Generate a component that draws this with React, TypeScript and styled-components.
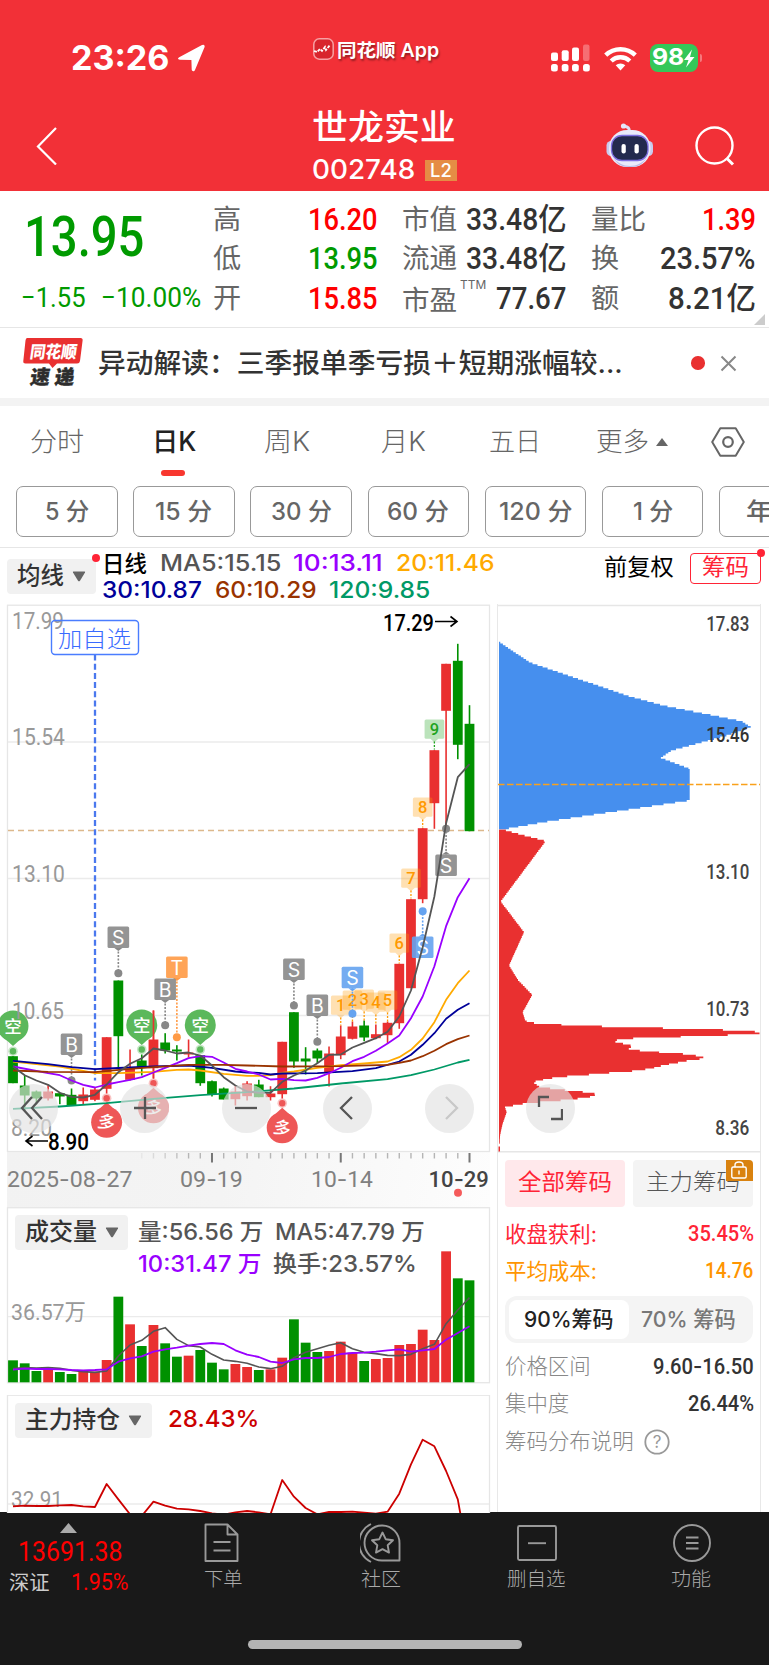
import React, { useLayoutEffect, useRef, useState } from 'react';
import styled, { createGlobalStyle } from 'styled-components';

const UI = `Inter, "Noto Sans CJK SC", sans-serif`;
const DIN = `Roboto, "Noto Sans CJK SC", sans-serif`;
const RED = '#e93030';
const GREEN = '#009100';

const GlobalStyle = createGlobalStyle`
  * { box-sizing: border-box; }
  body { margin: 0; background: #fff; overflow: hidden; font-family: ${UI}; }
  svg { display: block; flex: none; }
`;

/* ---------- text fitted to a fixed column width ---------- */
type TextProps = {
  children: string; w: number; size: number; color?: string; weight?: number;
  gap?: number; din?: boolean; drop?: number; shadow?: boolean;
};
const TextBox = styled.span<{ $w: number; $gap: number; $drop: number }>`
  display: block; flex: none; width: ${p => p.$w}px; margin-left: ${p => p.$gap}px;
  padding-top: ${p => p.$drop}px; white-space: nowrap; line-height: 1.2;
`;
const TextInk = styled.span<{ $size: number; $color: string; $weight: number; $din: boolean; $shadow: boolean }>`
  display: inline-block; vertical-align: top; transform-origin: 0 50%;
  font-family: ${p => (p.$din ? DIN : UI)};
  font-size: ${p => p.$size}px; font-weight: ${p => p.$weight}; color: ${p => p.$color};
  margin-left: ${p => -p.$size * 0.04}px;
  text-shadow: ${p => (p.$shadow ? '1px 2px 2px rgba(0,0,0,.4)' : 'none')};
`;
const Dash = styled.span`font-family: Inter, sans-serif;`;

function Text({ children, w, size, color = '#333', weight = 400, gap = 0, din = false, drop = 0, shadow = false }: TextProps) {
  const ref = useRef<HTMLSpanElement>(null);
  const [scale, setScale] = useState(1);
  useLayoutEffect(() => {
    if (ref.current) setScale((w + size * 0.08) / ref.current.offsetWidth);
  }, [w, size, children]);
  return (
    <TextBox $w={w} $gap={gap} $drop={drop}>
      <TextInk ref={ref} $size={size} $color={color} $weight={weight} $din={din} $shadow={shadow} style={{ transform: `scaleX(${scale})` }}>
        {din && children.includes('-')
          ? children.split(/(-)/).map((part, i) => (part === '-' ? <Dash key={i}>-</Dash> : part))
          : children}
      </TextInk>
    </TextBox>
  );
}

const Label = ({ x, y, w, size, fill = '#999', weight = 400, children, family = DIN }: {
  x: number; y: number; w: number; size: number; fill?: string; weight?: number; children: string; family?: string;
}) => (
  <text x={x - size * 0.04} y={y} fontFamily={family} fontSize={size} fontWeight={weight} fill={fill}
    textLength={w + size * 0.08} lengthAdjust="spacingAndGlyphs">
    {children.split(/(-)/).map((part, i) => (part === '-' ? <tspan key={i} fontFamily="Inter">-</tspan> : part))}
  </text>
);

/* ---------- header ---------- */
const Page = styled.main`width: 769px; height: 1665px; display: flex; flex-direction: column; overflow: hidden; background: #fff;`;
const Header = styled.header`background: #f23037; height: 191px; flex: none;`;
const StatusBar = styled.div`height: 101px; padding: 15px 0 0 72.700px; display: flex; align-items: center;`;
const Gap = styled.div<{ $w: number; $up?: number }>`margin-left: ${p => p.$w}px; margin-bottom: ${p => p.$up || 0}px; display: flex; align-items: center; flex: none;`;
const Battery = styled.div`
  width: 48px; height: 27.500px; border-radius: 8px; background: #34c759; display: flex; align-items: center; margin-left: 13px; padding-left: 3px;
`;
const BatteryNub = styled.div`width: 2.500px; height: 8px; margin-left: 2px; border-radius: 0 3px 3px 0; background: rgba(255,255,255,.35);`;
const TitleBar = styled.div`height: 90px; display: flex; align-items: center; padding-left: 36px;`;
const TitleBlock = styled.div`width: 150px; margin-left: 256px; align-self: flex-start; padding-top: 4px; flex: none;`;
const Line = styled.div<{ $h: number; $pad?: number }>`height: ${p => p.$h}px; display: flex; align-items: center; padding-left: ${p => p.$pad || 0}px;`;
const Level = styled.div`width: 32px; height: 21.500px; margin-left: 11px; background: #e58c45; display: flex; align-items: center; justify-content: center;`;

const Robot = () => (
  <svg width="49" height="46" viewBox="605 124 49 46">
    <path d="M629 133c1-4-1-5-5-6" stroke="#dfe0f6" strokeWidth="3" fill="none" strokeLinecap="round" />
    <circle cx="623.5" cy="127" r="2.6" fill="#e6e6fa" />
    <rect x="606.5" y="142" width="9" height="15" rx="4.5" fill="#c9cbee" />
    <rect x="644" y="142" width="9" height="15" rx="4.5" fill="#c9cbee" />
    <rect x="609" y="131" width="41.500" height="37" rx="18" fill="#e9eafa" />
    <path d="M613 158c8 12 26 12 34 0-4 7-8 10-17 10s-13-3-17-10z" fill="#b9bce6" />
    <rect x="611.500" y="136.500" width="36.500" height="25" rx="10.500" fill="#232a4d" stroke="#7d6fe0" strokeWidth="1.300" />
    <rect x="621.500" y="145" width="4.300" height="9.500" rx="2.100" fill="#fff" />
    <rect x="634.500" y="145" width="4.300" height="9.500" rx="2.100" fill="#fff" />
  </svg>
);

function TopHeader() {
  return (
    <Header>
      <StatusBar>
        <Text w={96} size={33.5} weight={700} color="#fff">23:26</Text>
        <Gap $w={9}>
          <svg width="28" height="28" viewBox="0 0 28 28"><path d="M1.200 13.200 24 1q3-1.300 2.600 2L17 26c-.8 2-3.200 1.600-3.300-.4l-.3-9.600-11.500-.3C-.3 15.500-.6 14.200 1.200 13.200z" fill="#fff" /></svg>
        </Gap>
        <Gap $w={107} $up={18}>
          <svg width="21" height="22" viewBox="0 0 21 22">
            <rect x=".8" y=".8" width="19.400" height="20.400" rx="5.500" fill="#d8252d" stroke="#f7a1a4" strokeWidth="1.500" />
            <path d="M1 13l3 1 3-3 2 2 3-4 1 3 4-5" fill="none" stroke="#fff" strokeWidth="1.800" strokeDasharray="3 1.200" />
          </svg>
        </Gap>
        <Gap $w={4} $up={16}><Text w={101} size={18.500} weight={600} color="#fff" shadow>同花顺 App</Text></Gap>
        <Gap $w={112}>
          <svg width="39" height="28" viewBox="0 0 39 28" fill="#fff">
            <rect x="0" y="8.500" width="7" height="8.500" rx="2" /><rect x="10.700" y="6.300" width="7" height="10.700" rx="2" />
            <rect x="21" y="3.500" width="7" height="13.500" rx="2" /><rect x="32" y="0.500" width="6.500" height="16.500" rx="2" opacity=".3" />
            {[0, 10.7, 21, 32].map(x => <rect key={x} x={x} y="20" width="6.800" height="7.500" rx="2.500" />)}
          </svg>
        </Gap>
        <Gap $w={14}>
          <svg width="33" height="25" viewBox="0 0 33 25" fill="none" stroke="#fff" strokeWidth="4.400">
            <path d="M1.700 9.200a21.300 21.300 0 0 1 29.600 0" /><path d="M7.200 15a13.500 13.500 0 0 1 18.600 0" />
            <path d="M11.700 19.300 16.500 24.500l4.800-5.200a7.400 7.400 0 0 0-9.600 0z" fill="#fff" stroke="none" />
          </svg>
        </Gap>
        <Battery>
          <Text w={30.500} size={23} weight={700} color="#fff">98</Text>
          <svg width="12" height="19" viewBox="0 0 12 19"><path d="M9 .5 1 11h4.500L3 18.500 11.500 8H7z" fill="#fff" /></svg>
        </Battery>
        <BatteryNub />
      </StatusBar>
      <TitleBar>
        <svg width="21" height="38" viewBox="0 0 21 38"><path d="M20 1 2 19.500 20 37.500" fill="none" stroke="#fff" strokeWidth="2.200" /></svg>
        <TitleBlock>
          <Line $h={44}><Text w={141} size={35} weight={500} color="#fff">世龙实业</Text></Line>
          <Line $h={43}>
            <Text w={101} size={27} weight={500} color="#fff">002748</Text>
            <Level><Text w={20} size={18} weight={500} color="#fff">L2</Text></Level>
          </Line>
        </TitleBlock>
        <Gap $w={142}><Robot /></Gap>
        <Gap $w={40.500}>
          <svg width="40" height="40" viewBox="0 0 40 40" fill="none" stroke="#fff" strokeWidth="2.400"><circle cx="19.500" cy="19.500" r="18" /><path d="m31.500 32 6.500 6.500" strokeWidth="3" /></svg>
        </Gap>
      </TitleBar>
    </Header>
  );
}

/* ---------- quote ---------- */
const Quote = styled.section`height: 137px; flex: none; display: flex; border-bottom: 1px solid #e6e6e6; position: relative; padding-top: 8.500px;`;
const PriceBlock = styled.div`width: 214px; flex: none;`;
const StatColumn = styled.div`width: 162px; margin-right: 27px; flex: none;`;
const Stat = styled.div`height: 39.500px; display: flex; align-items: center; justify-content: space-between;`;
const StatName = styled.div`display: flex; align-items: center;`;
const Corner = styled.svg`position: absolute; right: 4.500px; bottom: 2.500px;`;

const stats: [string, number, string, number, string, string?][][] = [
  [['高', 26, '16.20', 67, '#f00'], ['低', 26, '13.95', 67, '#009a00'], ['开', 26, '15.85', 67, '#f00']],
  [['市值', 53, '33.48亿', 98, '#333'], ['流通', 53, '33.48亿', 98, '#333'], ['市盈', 53, '77.67', 68, '#333', 'TTM']],
  [['量比', 53, '1.39', 51, '#f00'], ['换', 26, '23.57%', 93, '#333'], ['额', 26, '8.21亿', 85, '#333']],
];

function QuotePanel() {
  return (
    <Quote>
      <PriceBlock>
        <Line $h={76} $pad={26.7}><Text din w={116} size={56} weight={500} color="#009a00">13.95</Text></Line>
        <Line $h={43} $pad={22}>
          <Text din w={62} size={27.500} color="#009a00">−1.55</Text>
          <Text din w={98} gap={18} size={27.500} color="#009a00">−10.00%</Text>
        </Line>
      </PriceBlock>
      {stats.map((col, i) => (
        <StatColumn key={i}>
          {col.map(([name, nw, value, vw, color, sup]) => (
            <Stat key={name}>
              <StatName>
                <Text w={nw} size={27} color="#666" drop={sup ? 5 : 1}>{name}</Text>
                {sup && <Gap $w={4} $up={20}><Text w={25} size={11.500} color="#666">{sup}</Text></Gap>}
              </StatName>
              <Text din w={vw} size={31} weight={500} color={color}>{value}</Text>
            </Stat>
          ))}
        </StatColumn>
      ))}
      <Corner width="11" height="11"><path d="M11 0v11H0z" fill="#ccc" /></Corner>
    </Quote>
  );
}

/* ---------- news ---------- */
const News = styled.section`height: 78px; flex: none; display: flex; align-items: center; padding-left: 23px; border-bottom: 8px solid #f3f3f3;`;
const NewsDot = styled.i`width: 13.500px; height: 13.500px; border-radius: 50%; background: #e93030; margin-left: 69px;`;
function NewsBar() {
  return (
    <News>
      <svg width="60" height="50" viewBox="0 0 60 50">
        <path d="M4 0H57.500Q60 0 59.600 2.500L57 23Q56.600 25.500 54 25.500H34L29.500 30 26 25.500H2.500Q0 25.500.3 23L2.500 2.500Q2.800 0 4 0z" fill="#e93030" />
        <g transform="skewX(-8)">
          <text x="9" y="20" fontFamily={UI} fontWeight="900" fontSize="17" textLength="47" lengthAdjust="spacingAndGlyphs" fill="#fff">同花顺</text>
          <text x="13" y="46.500" fontFamily={UI} fontWeight="900" fontSize="19.500" textLength="44" fill="#2d2d2d" stroke="#2d2d2d" strokeWidth=".4">速递</text>
        </g>
      </svg>
      <Text w={523} gap={16} size={27} weight={500} drop={2}>异动解读：三季报单季亏损＋短期涨幅较...</Text>
      <NewsDot />
      <Gap $w={15.500}><svg width="17" height="17" viewBox="0 0 17 17"><path d="m1.500 1.500 14 14m0-14-14 14" stroke="#888" strokeWidth="2" /></svg></Gap>
    </News>
  );
}

/* ---------- periods ---------- */
const Tabs = styled.nav`height: 80px; flex: none; display: flex; padding: 0 0 0 31px; position: relative;`;
const Tab = styled.div`height: 71px; display: flex; align-items: center; position: relative; flex: none;`;
const Underline = styled.i`position: absolute; right: 11px; top: 64px; width: 23.500px; height: 6px; border-radius: 3px; background: #f8372f;`;
const tabs: [string, number, number][] = [['分时', 52, 0], ['日K', 42.5, 70], ['周K', 44.5, 69.5], ['月K', 43, 73], ['五日', 50, 65], ['更多', 51, 57]];

const Periods = styled.div`height: 62px; flex: none; display: flex; gap: 15.700px; padding-left: 16px; border-bottom: 1.500px solid #e6e6e6; overflow: hidden;`;
const Period = styled.div`width: 101.500px; height: 51px; flex: none; border: 1px solid #999; border-radius: 7px; display: flex; align-items: center; justify-content: center;`;
const periods: [string, number][] = [['5 分', 42], ['15 分', 55], ['30 分', 59], ['60 分', 60], ['120 分', 72], ['1 分', 38], ['年K', 45]];

function PeriodBar() {
  return (
    <>
      <Tabs>
        {tabs.map(([t, w, gap]) => (
          <Tab key={t}>
            <Text w={w} gap={gap} size={26.500} color={t === '日K' ? '#222' : '#666'} weight={t === '日K' ? 500 : 300} drop={1}>{t}</Text>
            {t === '日K' && <Underline />}
            {t === '更多' && <Gap $w={7}><svg width="12" height="8"><path d="M6 0l6 8H0z" fill="#666" /></svg></Gap>}
          </Tab>
        ))}
        <Tab>
          <Gap $w={43}>
            <svg width="34" height="30" viewBox="0 0 34 30" fill="none" stroke="#666" strokeWidth="2"><path d="M9.300 1.200h15.400L32.800 15l-8.100 13.800H9.300L1.200 15z" strokeLinejoin="round" /><circle cx="17" cy="15" r="4.800" strokeWidth="2.200" /></svg>
          </Gap>
        </Tab>
      </Tabs>
      <Periods>
        {periods.map(([t, w]) => <Period key={t}><Text w={w} size={24} weight={500} color="#666" drop={2}>{t}</Text></Period>)}
      </Periods>
    </>
  );
}

/* ---------- moving-average row ---------- */
const MaRow = styled.section`height: 56px; flex: none; display: flex; padding-left: 7px;`;
const Select = styled.div<{ $w: number; $h: number }>`
  width: ${p => p.$w}px; height: ${p => p.$h}px; background: #f1f1f1; border-radius: 4px; flex: none;
  display: flex; align-items: center; padding-left: 11px; position: relative;
`;
const Dot = styled.i<{ $right: number; $top: number }>`position: absolute; width: 8px; height: 8px; border-radius: 50%; background: #ff2436; right: ${p => p.$right}px; top: ${p => p.$top}px;`;
const Values = styled.div`margin-left: 7px; width: 502px; flex: none; padding-top: .500px;`;
const ChipButton = styled.div`width: 70.500px; height: 31px; border: 1.500px solid #ff2436; border-radius: 4px; display: flex; align-items: center; justify-content: center; position: relative; margin-left: 17px; flex: none;`;
const Right = styled.div`display: flex; align-items: center; height: 40px;`;
const Down = () => <Gap $w={9}><svg width="14" height="11"><path d="M1.500.5h11q1 0 .5 1L8 9.700q-1 1-2 0L1 1.500Q.5.5 1.500.5z" fill="#666" /></svg></Gap>;
const SelectWrap = styled.div`padding-top: 11px;`;

function MaBar() {
  return (
    <MaRow>
      <SelectWrap><Select $w={89} $h={35}><Text w={45} size={23.500} weight={500}>均线</Text><Down /><Dot $right={-4} $top={-5} /></Select></SelectWrap>
      <Values>
        <Line $h={30}>
          <Text w={43} size={22.500} weight={500} color="#000">日线</Text>
          <Text w={119} gap={15} size={23} weight={500} color="#555">MA5:15.15</Text>
          <Text w={88} gap={14} size={23} weight={500} color="#90f">10:13.11</Text>
          <Text w={97} gap={15} size={23} weight={500} color="#fa0">20:11.46</Text>
        </Line>
        <Line $h={25}>
          <Text w={98} size={23} weight={500} color="#009">30:10.87</Text>
          <Text w={100} gap={15} size={23} weight={500} color="#930">60:10.29</Text>
          <Text w={100} gap={14} size={23} weight={500} color="#096">120:9.85</Text>
        </Line>
      </Values>
      <Right>
        <Text w={68} size={23} color="#000">前复权</Text>
        <ChipButton><Text w={45} size={23} color="#ff2436">筹码</Text><Dot $right={-5} $top={-5} /></ChipButton>
      </Right>
    </MaRow>
  );
}

/* ---------- K chart ---------- */
const cx = (i: number) => 13 + i * 11.705;
type Candle = [1 | 0, number, number, number, number]; // rising, body top, body bottom, high, low
const candles: Candle[] = [
  [0, 1055.7, 1082.7, 1055.7, 1082.7], [0, 1085, 1095, 1075, 1110], [0, 1091, 1098, 1090, 1104], [1, 1091, 1098, 1084.7, 1100],
  [0, 1092.7, 1096, 1092, 1103.7], [0, 1094.3, 1105, 1088, 1105], [1, 1094, 1100.7, 1087, 1104], [1, 1089, 1099.3, 1087, 1100.7],
  [1, 1036.7, 1088.3, 1036.7, 1093], [0, 980, 1035.7, 980, 1067], [1, 1068.3, 1079.3, 1049, 1080], [0, 1060, 1066.7, 1054, 1075],
  [1, 1039, 1067.7, 1010, 1078], [0, 1042, 1050, 1032.7, 1053], [0, 1049, 1051, 1044.7, 1060], [1, 1052, 1054, 1039, 1057],
  [0, 1054.7, 1082.7, 1054.7, 1085.3], [0, 1080.7, 1094.3, 1080, 1096], [0, 1088, 1099, 1087, 1099], [1, 1091, 1098.7, 1086, 1105],
  [1, 1083, 1095.7, 1080.7, 1100], [0, 1084, 1096.7, 1079.3, 1096.7], [1, 1093, 1096.7, 1085.7, 1100], [1, 1041.3, 1093.7, 1041.3, 1098],
  [0, 1011.7, 1061, 1011.7, 1067.3], [0, 1058, 1061, 1046.7, 1074], [0, 1050, 1058, 1048, 1062.7], [1, 1053, 1072.3, 1046, 1086],
  [1, 1036, 1054.7, 1025, 1058.7], [1, 1026, 1038.3, 1021, 1039], [0, 1025, 1037, 1020, 1040.7], [1, 1033.7, 1037.7, 1024, 1038.7],
  [1, 1022.3, 1034.7, 1021, 1042.7], [1, 963.3, 1022.7, 963.3, 1028.3], [1, 898.7, 987.7, 898.7, 987.7], [1, 827.7, 898.7, 827.7, 902.7],
  [1, 749.7, 802.7, 749.7, 828.3], [1, 663.3, 710.3, 663.3, 828.7], [0, 660.3, 744.3, 643.3, 758.7], [0, 723.3, 830.7, 704.7, 830.7],
];
type Series = { color: string; pts: [number, number][] };
const seq = (ys: number[]): [number, number][] => ys.map((y, i) => [i, y]);
const maLines: Series[] = [
  { color: '#096', pts: [[0, 1108.3], [4, 1106], [8, 1102.7], [12, 1098.3], [16, 1094.7], [20, 1091.7], [24, 1088], [28, 1083], [32, 1078.7], [34, 1074.7], [36, 1069], [38, 1062], [39, 1059.3]] },
  { color: '#fa0', pts: [[0, 1061], [4, 1066], [7, 1072.7], [9, 1072.7], [12, 1071.3], [14, 1069.3], [15, 1069], [16, 1070], [18, 1073.3], [20, 1075.3], [21, 1075.3], [22, 1074.7], [23, 1072.3], [24, 1071], [26, 1067.3], [28, 1064.7], [30, 1063], [32, 1061], [33, 1056.7], [34, 1049.3], [35, 1038], [36, 1021.7], [37, 999.3], [38, 982.7], [39, 970]] },
  { color: '#009', pts: [[0, 1060.3], [3, 1063.7], [5, 1066.7], [7, 1068.7], [9, 1067.5], [12, 1066], [15, 1065], [17, 1067.3], [19, 1071], [20, 1072], [21, 1072.3], [22, 1074], [23, 1073], [26, 1072.7], [29, 1070.7], [31, 1067.7], [33, 1061], [34, 1054.3], [35, 1044.3], [36, 1032.7], [37, 1018.3], [38, 1009.3], [39, 1002.7]] },
  { color: '#90f', pts: [[0, 1066], [3, 1072.7], [4, 1074.7], [5, 1080], [6, 1084.3], [7, 1087], [8, 1084], [9, 1081.7], [10, 1079.3], [11, 1076.7], [12, 1072], [13, 1067.3], [14, 1062.7], [15, 1057.7], [16, 1055.7], [17, 1056.3], [18, 1062], [19, 1068.3], [20, 1071], [21, 1074], [22, 1079], [23, 1078.3], [24, 1079.7], [25, 1080], [26, 1077.3], [27, 1072.7], [28, 1067.3], [29, 1060.7], [30, 1056.3], [31, 1050.3], [32, 1043], [33, 1035], [34, 1017.7], [35, 996], [36, 965.7], [37, 925.7], [38, 896.7], [39, 877.7]] },
  { color: '#930', pts: [[0, 1070], [3, 1071.3], [7, 1071.7], [10, 1068.3], [12, 1066.7], [15, 1064.3], [18, 1064.3], [20, 1065], [23, 1066], [28, 1065.7], [32, 1064.3], [33, 1062.3], [34, 1060], [35, 1055.7], [36, 1050.3], [37, 1043.7], [38, 1038.7], [39, 1035]] },
  { color: '#555', pts: seq([1066, 1074.7, 1080, 1084.3, 1092.3, 1096.3, 1097, 1094.3, 1084, 1071.7, 1063.3, 1057.7, 1048, 1050, 1053, 1052, 1055, 1065, 1076.7, 1085, 1091, 1092.3, 1092.3, 1081.3, 1075, 1070, 1062.7, 1054.3, 1054, 1047, 1042.3, 1037.7, 1031.3, 1016, 990, 946.7, 896, 822.7, 776.7, 763.7]) },
];
const Poly = ({ s, w = 1.8 }: { s: Series; w?: number }) => (
  <polyline points={s.pts.map(([i, y]) => `${cx(i)},${y}`).join(' ')} fill="none" stroke={s.color} strokeWidth={w} strokeLinejoin="round" />
);

const flags: [number, string, number, number, string][] = [
  [5, 'B', 1033, 1080, '#888'], [9, 'S', 926, 972.7, '#888'], [14, 'T', 956, 1036.7, '#ff9a45'], [13, 'B', 978, 1024.7, '#888'],
  [24, 'S', 958, 1005, '#888'], [26, 'B', 994, 1041.3, '#888'], [29, 'S', 966.3, 1013.3, '#65a3f0'],
  [35, 'S', 936, 910.7, '#65a3f0'], [37, 'S', 854, 828.3, '#888'],
];
const Flag = ({ f: [i, t, top, dot, color] }: { f: [number, string, number, number, string] }) => {
  const x = cx(i);
  const below = dot > top;
  const edge = below ? top + 21.5 : top;
  const dir = below ? 1 : -1;
  return (
    <g>
      <line x1={x} x2={x} y1={edge} y2={dot} stroke={color} strokeWidth="1.600" strokeDasharray="2 1.500" />
      <circle cx={x} cy={dot} r="4" fill={color} />
      <rect x={x - 10.8} y={top} width="21.600" height="21.500" rx="1.500" fill={color} fillOpacity=".9" />
      <path d={`M${x - 4} ${edge}h8l-4 ${3 * dir}z`} fill={color} />
      <text x={x} y={top + 18} textAnchor="middle" fontFamily="Inter" fontSize="19.500" fill="#fff">{t}</text>
    </g>
  );
};
const counts: [number, string, number, number][] = [
  [28, '1', 995, 1025], [29, '2', 990, 1021], [30, '3', 989, 1020], [31, '4', 992, 1024], [32, '5', 990, 1021],
  [33, '6', 933, 963], [34, '7', 868, 898], [35, '8', 797, 827], [36, '9', 719, 749],
];
const pins: [number, number, number, string][] = [
  [0, 1025.5, 1050.7, '空'], [11, 1024.5, 1049, '空'], [16, 1024.5, 1049, '空'],
  [8, 1121.7, 1097.7, '多'], [12, 1107.3, 1082.7, '多'], [23, 1127.3, 1102.7, '多'],
];
const Pin = ({ p: [i, y, dot, t] }: { p: [number, number, number, string] }) => {
  const x = cx(i);
  const up = t === '空';
  const color = up ? '#5bb85b' : '#ee5757';
  const d = up ? 1 : -1;
  return (
    <g>
      <circle cx={x} cy={dot} r="4.800" fill={color} opacity=".35" />
      <circle cx={x} cy={dot} r="3.200" fill={color} />
      <circle cx={x} cy={y} r="15.500" fill={color} />
      <path d={`M${x - 10} ${y + 11 * d}L${x} ${y + 20 * d}L${x + 10} ${y + 11 * d}z`} fill={color} />
      <text x={x} y={y + 6.5} textAnchor="middle" fontFamily={`"Noto Sans CJK SC"`} fontSize="17.500" fontWeight="500" fill="#fff" transform={up ? undefined : `rotate(14 ${x} ${y})`}>{t}</text>
    </g>
  );
};

const ChartArea = styled.div`position: relative; height: 547.500px;`;
const Controls = styled.div`position: absolute; left: 8.500px; top: 479.500px; display: flex; gap: 52.500px;`;
const RoundButton = styled.div<{ $after?: number }>`
  width: 49px; height: 49px; border-radius: 50%; background: rgba(226,226,226,.65); margin-right: ${p => p.$after || 0}px;
  display: flex; align-items: center; justify-content: center;
`;
const Glyph = ({ d, color = '#555' }: { d: string; color?: string }) => (
  <svg width="26" height="26" viewBox="-13 -13 26 26"><path d={d} fill="none" stroke={color} strokeWidth="2.300" /></svg>
);

function KChart() {
  return (
    <ChartArea>
      <svg width="497" height="547.500" viewBox="0 603.500 497 547.500" overflow="visible">
        <rect x="7.500" y="604.700" width="482" height="546.300" fill="#fff" stroke="#e6e6e6" strokeWidth="1.300" />
        {[741.5, 878, 1015].map(y => <line key={y} x1="8" x2="489" y1={y} y2={y} stroke="#ebebeb" strokeWidth="1.300" />)}
        <line x1="8" x2="489" y1="830" y2="830" stroke="#dcb88c" strokeWidth="1.300" strokeDasharray="6 4" />
        <line x1="95" x2="95" y1="654" y2="1080" stroke="#4a78ee" strokeWidth="2.300" strokeDasharray="6 3.200" />
        {candles.map(([up, t, b, h, l], i) => (
          <g key={i} fill={up ? RED : GREEN}>
            <rect x={cx(i) - 0.8} y={h} width="1.600" height={l - h} />
            <rect x={cx(i) - 4.9} y={t} width="9.800" height={b - t} />
          </g>
        ))}
        {counts.map(([i, t, y, end]) => {
          const c = t === '9' ? '#1fa31f' : '#f90';
          return (
            <g key={i}>
              <rect x={cx(i) - 9.8} y={y} width="19.600" height="19.300" rx="1.500" fill={c} fillOpacity=".3" />
              <path d={`M${cx(i) - 4} ${y + 19.3}h8l-4 3.500z`} fill={c} fillOpacity=".3" />
              <line x1={cx(i)} x2={cx(i)} y1={y + 22} y2={end} stroke={c} strokeWidth="1.300" strokeDasharray="2 1.500" />
              <text x={cx(i)} y={y + 15.5} textAnchor="middle" fontFamily="Roboto" fontSize="16.500" fontWeight="500" fill={c}>{t}</text>
            </g>
          );
        })}
        {pins.map((p, i) => <Pin key={i} p={p} />)}
        {candles.slice(12, 13).map(([, , , h, l]) => <rect key={h} x={cx(12) - 0.8} y={h} width="1.600" height={l - h} fill={RED} />)}
        {flags.map(f => <Flag key={f[0]} f={f} />)}
        {maLines.map(s => <Poly key={s.color} s={s} />)}
        <Label x={13} y={628} w={50} size={23}>17.99</Label>
        <Label x={13} y={744} w={51} size={23}>15.54</Label>
        <Label x={13} y={881} w={51} size={23}>13.10</Label>
        <Label x={13} y={1018} w={50} size={23}>10.65</Label>
        <Label x={12} y={1135.5} w={39} size={23}>8.20</Label>
        <Label x={384} y={630} w={49} size={23} weight={500} fill="#000">17.29</Label>
        <path d="M435 621h22m-6.500-5 6.500 5-6.500 5" fill="none" stroke="#000" strokeWidth="1.600" />
        <Label x={49} y={1149} w={39} size={23} weight={500} fill="#000">8.90</Label>
        <path d="M48 1140.500H26m6.500-5-6.500 5 6.500 5" fill="none" stroke="#000" strokeWidth="1.600" />
        <rect x="51.500" y="620" width="87" height="34" rx="3.500" fill="none" stroke="#4a7dff" strokeWidth="1.400" />
        <Label x={59} y={646.500} w={71} size={23} weight={300} fill="#3a6bff" family={UI}>加自选</Label>
      </svg>
      <Controls>
        <RoundButton $after={10}><Glyph d="M-1 -11-11 0-1 11M9 -11-1 0 9 11" /></RoundButton>
        <RoundButton><Glyph d="M-11 0H11M0-11V11" /></RoundButton>
        <RoundButton><Glyph d="M-11 0H11" /></RoundButton>
        <RoundButton><Glyph d="M4-11-7 0 4 11" /></RoundButton>
        <RoundButton><Glyph color="#c8c8c8" d="M-3-11 8 0-3 11" /></RoundButton>
      </Controls>
    </ChartArea>
  );
}

const AxisBar = styled.div`height: 55px; margin-left: 7px; width: 483px; background: linear-gradient(100deg, #f2f2f2 0%, #f4f4f4 45%, #fdfdfd 100%);`;
function DateAxis() {
  return (
    <AxisBar>
      <svg width="483" height="55" viewBox="7 1151 483 55">
        {Array.from({ length: 29 }, (_, k) => k + 11).map(i => {
          const major = i === 17 || i === 28 || i === 39;
          return <rect key={i} x={cx(i) - (major ? 1 : 0.7)} y="1152" width={major ? 2 : 1.4} height={major ? 9.5 : 5.5} fill={major ? '#777' : '#b5b5b5'} opacity={major ? 1 : Math.min(1, (i - 10) / 5)} />;
        })}
        <Label x={8} y={1185.5} w={123.500} size={22.500} fill="#808080">2025-08-27</Label>
        <Label x={181} y={1185.5} w={61} size={22.500} fill="#808080">09-19</Label>
        <Label x={312} y={1185.5} w={60} size={22.500} fill="#808080">10-14</Label>
        <Label x={429.500} y={1185.5} w={58.500} size={22.500} weight={500} fill="#444">10-29</Label>
        <circle cx="458" cy="1191.700" r="4" fill="#f55b5b" />
      </svg>
    </AxisBar>
  );
}

/* ---------- volume ---------- */
const vy = (z: number) => 1180 + z / 3;
const volumes = [538, 547, 570, 567, 573, 579, 570, 572, 537, 347, 430, 495, 432, 487, 527, 524, 507, 545, 565, 549, 558, 567, 565, 530, 415, 485, 513, 510, 482, 515, 540, 534, 531, 492, 489, 446, 477, 211, 292, 298];
const risingDays = new Set([3, 6, 7, 8, 10, 12, 15, 19, 20, 22, 23, 27, 28, 29, 31, 32, 33, 34, 35, 36, 37]);
const volMa5 = [563, 560, 561, 560, 562, 568, 572, 574, 570, 525, 492, 478, 451, 440, 475, 494, 498, 520, 537, 541, 547, 558, 563, 556, 530, 514, 503, 493, 485, 503, 514, 518, 523, 524, 520, 503, 490, 428, 387, 350];
const volMa10 = [566, 563, 564, 564, 565, 567, 568, 567, 565, 542, 532, 526, 512, 505, 500, 494, 489, 486, 489, 508, 521, 528, 542, 546, 535, 531, 531, 528, 519, 516, 515, 512, 508, 505, 512, 508, 504, 476, 456, 436];
const holding = [976, 974, 975, 975, 973, 972, 976, 978, 909, 955, 1000, 1005, 962, 974, 983, 985, 990, 997, 1001, 994, 990, 994, 1000, 897, 947, 981, 1000, 993, 993, 992, 995, 998, 992, 938, 850, 776, 796, 870, 955, 1150];

const Panel = styled.div<{ $h: number }>`position: relative; height: ${p => p.$h}px; overflow: hidden;`;
const PanelHead = styled.div`position: absolute; left: 15px; top: 8px; display: flex; align-items: flex-start;`;

function VolumePanel() {
  return (
    <Panel $h={188}>
      <svg width="497" height="188" viewBox="0 1206 497 188">
        <rect x="7.500" y="1206.700" width="482" height="175" fill="#fff" stroke="#e6e6e6" strokeWidth="1.300" />
        <line x1="8" x2="489" y1="1315.700" y2="1315.700" stroke="#ebebeb" strokeWidth="1.300" />
        <Label x={12} y={1318.5} w={73} size={22.500}>36.57万</Label>
        {volumes.map((v, i) => <rect key={i} x={cx(i) - 4.9} y={vy(v)} width="9.800" height={1381.300 - vy(v)} fill={risingDays.has(i) ? RED : GREEN} />)}
        <Poly s={{ color: '#555', pts: seq(volMa5.map(vy)) }} w={1.600} />
        <Poly s={{ color: '#90f', pts: seq(volMa10.map(vy)) }} />
      </svg>
      <PanelHead>
        <Select $w={112.500} $h={35}><Text w={70} size={24} weight={500}>成交量</Text><Down /></Select>
        <Gap $w={11}>
          <div>
            <Line $h={36}>
              <Text w={123} size={23} weight={500} color="#555">量:56.56 万</Text>
              <Text w={148} gap={14} size={23} weight={500} color="#555">MA5:47.79 万</Text>
            </Line>
            <Line $h={28}>
              <Text w={122} size={23} weight={500} color="#90f">10:31.47 万</Text>
              <Text w={142} gap={13} size={23} weight={500} color="#555">换手:23.57%</Text>
            </Line>
          </div>
        </Gap>
      </PanelHead>
    </Panel>
  );
}

function HoldingPanel() {
  return (
    <Panel $h={118}>
      <svg width="497" height="118" viewBox="0 1394 497 118">
        <rect x="7.500" y="1394.200" width="482" height="175" fill="#fff" stroke="#e6e6e6" strokeWidth="1.300" />
        <line x1="8" x2="489" y1="1503" y2="1503" stroke="#ebebeb" strokeWidth="1.300" />
        <Label x={12} y={1506} w={50} size={22.500}>32.91</Label>
        <Poly s={{ color: '#c00', pts: seq(holding.map(vy)) }} />
      </svg>
      <PanelHead>
        <Select $w={136.500} $h={35}><Text w={93} size={24} weight={500}>主力持仓</Text><Down /></Select>
        <Line $h={35}><Text w={89} gap={17} size={23} weight={500} color="#c00">28.43%</Text></Line>
      </PanelHead>
    </Panel>
  );
}

/* ---------- chip distribution ---------- */
const a = (x: number, y: number): [number, number] => [380 + x / 3, 600 + y / 3];
const b = (x: number, y: number): [number, number] => [490 + x / 3, 900 + y / 3];
const blueEdge = [a(357, 124), a(450, 186), a(750, 288), a(850, 315), a(1085, 362), a(1113, 380), a(1040, 405), a(950, 430), a(875, 450), a(842, 472), a(925, 503), a(929, 506), a(929, 600), a(760, 625), a(490, 665), a(375, 686)];
const redEdge = [a(370, 687), a(385, 692), a(497, 722), b(32, 3), b(102, 95), b(57, 195), b(85, 240), b(127, 283), b(98, 335), b(105, 358), b(112, 364), b(135, 368), b(220, 373), b(340, 378), b(482, 382), b(632, 386), b(788, 391), b(810, 399), b(705, 404), b(566, 409), b(428, 414), b(382, 418), b(375, 424), b(428, 436), b(415, 446), b(466, 452), b(530, 457), b(602, 462), b(650, 473), b(590, 481), b(565, 486), b(518, 495), b(480, 505), b(426, 512), b(370, 516), b(315, 521), b(245, 526), b(190, 532), b(158, 538), b(128, 545), b(150, 560), b(235, 570), b(272, 573), b(320, 580), b(310, 588), b(245, 597), b(110, 608), b(75, 614), b(45, 620), b(50, 635), b(38, 670), b(30, 705), b(29, 730)];
const steps = (edge: [number, number][]) => {
  const end = edge[edge.length - 1][1];
  const h = 1.72;
  let k = 0;
  let d = `M499 ${edge[0][1]}`;
  for (let y = edge[0][1]; y < end; y += h) {
    const mid = Math.min(y + h / 2, end);
    while (k < edge.length - 2 && edge[k + 1][1] < mid) k++;
    const [x0, y0] = edge[k];
    const [x1, y1] = edge[k + 1];
    const x = x0 + ((x1 - x0) * (mid - y0)) / (y1 - y0 || 1);
    d += `H${x.toFixed(1)}V${Math.min(y + h, end).toFixed(1)}`;
  }
  return d + 'H499z';
};

const Body = styled.section`flex: 1; min-height: 0; display: flex;`;
const Left = styled.div`width: 497px; flex: none;`;
const Side = styled.div`width: 264px; border: solid #e8e8e8; border-width: 0 1.500px 0 1.500px; flex: none;`;
const ChipArea = styled.div`position: relative; margin-left: -1.500px; height: 547.500px;`;
const Expand = styled.div`position: absolute; left: 29px; top: 479.500px;`;
const SideInfo = styled.div`padding: 8px 0 0 6.500px;`;
const ChipTabs = styled.div`display: flex; gap: 8px; height: 47px; margin-bottom: 9.500px;`;
const ChipTab = styled.div<{ $on?: boolean }>`
  width: 120px; border-radius: 4px; background: ${p => (p.$on ? '#ffe8eb' : '#f4f4f4')}; position: relative;
  display: flex; align-items: center; justify-content: center;
`;
const Lock = styled.div`position: absolute; right: 0; top: 0; width: 27px; height: 21px; background: #d9820f; border-radius: 0 4px 0 0; display: flex; justify-content: center; align-items: center;`;
const InfoRow = styled.div<{ $h: number }>`height: ${p => p.$h}px; width: 248px; padding-left: 1px; display: flex; align-items: center; justify-content: space-between;`;
const Segment = styled.div`width: 248px; height: 47px; border-radius: 12px; background: #f4f4f4; padding: 4px; display: flex; margin-bottom: 5px; margin-top: 6px;`;
const SegmentItem = styled.div<{ $on?: boolean }>`width: 120px; border-radius: 8px; background: ${p => (p.$on ? '#fff' : 'transparent')}; display: flex; align-items: center; justify-content: center;`;

function ChipPanel() {
  return (
    <Side>
      <ChipArea>
        <svg width="264" height="547.500" viewBox="497 603.500 264 547.500" overflow="visible">
          <path d="M498 605H760.500M498 1151.300H761" stroke="#e6e6e6" strokeWidth="1.500" />
          <path d={steps(redEdge)} fill="#e93030" />
          <rect x="498.500" y="1146" width="1.500" height="5" fill="#e93030" />
          <path d={steps(blueEdge)} fill="#468fee" />
          <line x1="498" x2="760" y1="784" y2="784" stroke="#f9a11b" strokeWidth="1.700" strokeDasharray="6.500 2.500" />
          <Label x={707} y={630} w={41.500} size={19.500} weight={500} fill="#444">17.83</Label>
          <Label x={707} y={741} w={41.500} size={19.500} weight={500} fill="#333">15.46</Label>
          <Label x={707} y={878.500} w={41.500} size={19.500} weight={500} fill="#444">13.10</Label>
          <Label x={707} y={1015} w={41.500} size={19.500} weight={500} fill="#444">10.73</Label>
          <Label x={716} y={1134} w={32.500} size={19.500} weight={500} fill="#444">8.36</Label>
        </svg>
        <Expand><RoundButton><Glyph d="M-11 -1V-11H-1M12 1V11H1" /></RoundButton></Expand>
      </ChipArea>
      <SideInfo>
        <ChipTabs>
          <ChipTab $on><Text w={92} size={23} weight={400} color="#ff2436">全部筹码</Text></ChipTab>
          <ChipTab>
            <Text w={92} size={23} weight={300} color="#555">主力筹码</Text>
            <Lock><svg width="16" height="18" viewBox="0 0 16 18" fill="none" stroke="#fff" strokeWidth="1.400"><rect x=".8" y="6" width="14.400" height="11" rx="1.500" /><path d="M4 6V4q0-3 4-3t4 3v2M8 9.500v4" /></svg></Lock>
          </ChipTab>
        </ChipTabs>
        <InfoRow $h={37}><Text w={90} size={21.500} weight={400} color="#ff2436">收盘获利:</Text><Text din w={64} size={22} weight={500} color="#ff2436">35.45%</Text></InfoRow>
        <InfoRow $h={37}><Text w={90} size={21.500} weight={400} color="#ff9500">平均成本:</Text><Text din w={46.500} size={22} weight={500} color="#ff9500">14.76</Text></InfoRow>
        <Segment>
          <SegmentItem $on><Text w={88} size={21.500} weight={500} color="#222">90%筹码</Text></SegmentItem>
          <SegmentItem><Text w={93} size={21.500} weight={500} color="#777">70% 筹码</Text></SegmentItem>
        </Segment>
        <InfoRow $h={37.5}><Text w={84} size={21.500} weight={300} color="#888">价格区间</Text><Text din w={99} size={22} weight={500}>9.60-16.50</Text></InfoRow>
        <InfoRow $h={37.5}><Text w={63} size={21.500} weight={300} color="#888">集中度</Text><Text din w={64} size={22} weight={500}>26.44%</Text></InfoRow>
        <Line $h={38} $pad={1}>
          <Text w={127} size={21.500} weight={300} color="#888">筹码分布说明</Text>
          <Gap $w={11.500}>
            <svg width="26" height="26" viewBox="0 0 26 26"><circle cx="13" cy="13" r="11.700" fill="none" stroke="#999" strokeWidth="1.800" /><text x="13" y="19" textAnchor="middle" fontFamily="Inter" fontSize="17" fill="#999">?</text></svg>
          </Gap>
        </Line>
      </SideInfo>
    </Side>
  );
}

/* ---------- bottom bar ---------- */
const Footer = styled.footer`height: 153px; flex: none; background: #191919; display: flex; flex-direction: column;`;
const FooterRow = styled.div`display: flex; height: 127.500px;`;
const Index = styled.div`width: 150px; padding-top: 10px; flex: none;`;
const Action = styled.div<{ $w: number }>`width: ${p => p.$w}px; flex: none; display: flex; flex-direction: column; align-items: center; padding-top: 9.500px;`;
const HomeBar = styled.div`width: 273.500px; height: 9.500px; border-radius: 5px; background: #b4b4b4; margin-left: 248px;`;
const ActionIcon = ({ children }: { children: React.ReactNode }) => (
  <svg width="44" height="42" viewBox="0 0 44 42" fill="none" stroke="#999" strokeWidth="1.900" strokeLinejoin="round">{children}</svg>
);
const IconText = styled.div`height: 31px; display: flex; align-items: center; padding-top: 1px;`;

function BottomBar() {
  return (
    <Footer>
      <FooterRow>
        <Index>
          <Line $h={11} $pad={60}><svg width="17" height="10"><path d="M8.500 0 17 10H0z" fill="#aaa" /></svg></Line>
          <Line $h={38} $pad={19}><Text din w={102} size={27} color="#f00">13691.38</Text></Line>
          <Line $h={24} $pad={10}><Text w={39} size={20} color="#ccc">深证</Text><Text din w={56} gap={23} size={23} color="#f00">1.95%</Text></Line>
        </Index>
        <Action $w={147}>
          <ActionIcon><path d="M3.500 2.500h22l10 10v26.500h-32zM25.500 2.500v10h10M11.500 20h17M11.500 28.500h17" /></ActionIcon>
          <IconText><Text w={37} size={19.500} weight={300} color="#aaa">下单</Text></IconText>
        </Action>
        <Action $w={169}>
          <ActionIcon><path d="M39.500 38.500V21.500a17.500 17.500 0 1 0-17.500 17z" /><path d="M11 2a21 21 0 0 0 0 38" /><path d="m22.500 10.500 3.200 6.700 7.300 1-5.300 5.100 1.300 7.300-6.500-3.500-6.500 3.500 1.300-7.300-5.300-5.100 7.300-1z" /></ActionIcon>
          <IconText><Text w={38.500} size={19.500} weight={300} color="#aaa">社区</Text></IconText>
        </Action>
        <Action $w={142}>
          <ActionIcon><rect x="3" y="4" width="38" height="34" rx="1.500" /><path d="M13 21.200h18" /></ActionIcon>
          <IconText><Text w={57.500} size={19.500} weight={300} color="#aaa">删自选</Text></IconText>
        </Action>
        <Action $w={167}>
          <ActionIcon><circle cx="22" cy="21" r="18" /><path d="M16 15.500h12.500M16 21h12.500M16 26.500h12.500" /></ActionIcon>
          <IconText><Text w={38.500} size={19.500} weight={300} color="#aaa">功能</Text></IconText>
        </Action>
      </FooterRow>
      <HomeBar />
    </Footer>
  );
}

export default function App() {
  return (
    <Page>
      <GlobalStyle />
      <TopHeader />
      <QuotePanel />
      <NewsBar />
      <PeriodBar />
      <MaBar />
      <Body>
        <Left>
          <KChart />
          <DateAxis />
          <VolumePanel />
          <HoldingPanel />
        </Left>
        <ChipPanel />
      </Body>
      <BottomBar />
    </Page>
  );
}
